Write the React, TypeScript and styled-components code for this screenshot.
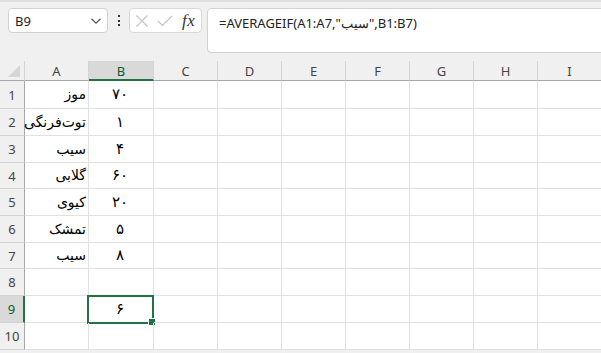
import styled, { createGlobalStyle } from 'styled-components';

const GlobalStyle = createGlobalStyle`
  html, body {
    margin: 0;
    padding: 0;
    background: #f0f0f0;
    overflow: hidden;
  }
  * {
    box-sizing: border-box;
  }
`;

const GREEN = '#217346';

const Page = styled.div`
  width: 601px;
  height: 353px;
  overflow: hidden;
  background: #f0f0f0;
  font-family: 'Noto Sans', 'Open Sans', sans-serif;
`;

const TopBar = styled.div`
  height: 61px;
  border-top: 2px solid #dedede;
  display: flex;
  align-items: flex-start;
  padding: 6px 0 0 8px;
`;

const NameBox = styled.div`
  width: 100px;
  height: 25px;
  background: #fff;
  border: 1px solid #d1d1d1;
  border-radius: 4px;
  display: flex;
  align-items: center;
  justify-content: space-between;
  padding: 0 5px 0 6px;
  font-size: 13px;
  color: #222;
`;

const Dots = styled.div`
  width: 21px;
  height: 25px;
  display: flex;
  flex-direction: column;
  align-items: center;
  justify-content: center;
  gap: 2.5px;

  span {
    width: 2px;
    height: 2px;
    background: #333;
  }
`;

const FxBox = styled.div`
  width: 73px;
  height: 25px;
  background: #fff;
  border: 1px solid #d8d8d8;
  border-radius: 4px;
  display: flex;
  align-items: center;
  padding: 0 0 0 5px;
  gap: 8px;
`;

const FxText = styled.span`
  font-family: 'Liberation Serif', 'DejaVu Serif', serif;
  font-style: italic;
  font-size: 17px;
  color: #333;
  margin-left: 1px;
  letter-spacing: 0.5px;
`;

const FormulaBox = styled.div`
  flex: 1;
  height: 45px;
  margin-left: 5px;
  margin-right: -8px;
  background: #fff;
  border: 1px solid #d1d1d1;
  border-radius: 4px;
  padding: 5px 0 0 11px;
  font-size: 13px;
  color: #222;
  white-space: nowrap;
`;

const Sheet = styled.div`
  display: grid;
  grid-template-columns: 25px 64px 65px repeat(7, 64px);
  grid-template-rows: 20px 28px 27px 27px 26px 27px 27px 26px 27px 27px 27px;
  background: #fff;
`;

const Corner = styled.div`
  background: #f0f0f0;
  border-right: 1px solid #d4d4d4;
  border-bottom: 1px solid #a8a8a8;
  position: relative;

  svg {
    position: absolute;
    right: 4px;
    bottom: 3px;
  }
`;

const ColHead = styled.div<{ $active?: boolean }>`
  background: ${({ $active }) => ($active ? '#d9d9d9' : '#f0f0f0')};
  border-right: 1px solid #d4d4d4;
  border-bottom: ${({ $active }) => ($active ? `2px solid ${GREEN}` : '1px solid #a8a8a8')};
  display: flex;
  align-items: center;
  justify-content: center;
  font-size: 13px;
  color: ${({ $active }) => ($active ? '#0e5c2f' : '#444')};
  padding-top: ${({ $active }) => ($active ? '1px' : '0')};
`;

const RowHead = styled.div<{ $active?: boolean }>`
  background: ${({ $active }) => ($active ? '#d9d9d9' : '#f0f0f0')};
  border-right: ${({ $active }) => ($active ? `2px solid ${GREEN}` : '1px solid #a8a8a8')};
  border-bottom: 1px solid #d4d4d4;
  display: flex;
  align-items: center;
  justify-content: center;
  font-size: 13px;
  color: ${({ $active }) => ($active ? '#0e5c2f' : '#444')};
`;

const Cell = styled.div<{ $align?: 'right' | 'center' }>`
  position: relative;
  border-right: 1px solid #e1e1e1;
  border-bottom: 1px solid #e1e1e1;
  display: flex;
  align-items: center;
  justify-content: ${({ $align }) => ($align === 'right' ? 'flex-end' : 'center')};
  padding: 0 2px 1px 0;
  font-family: 'DejaVu Sans', sans-serif;
  font-size: 14px;
  color: #000;
  white-space: nowrap;
`;

const Num = styled.span`
  font-size: 15px;
`;

const Selection = styled.div`
  position: absolute;
  left: -2px;
  top: -1px;
  right: -1px;
  bottom: -2px;
  border: 2px solid ${GREEN};
  pointer-events: none;
`;

const Handle = styled.div`
  position: absolute;
  right: -3px;
  bottom: -3px;
  width: 6px;
  height: 6px;
  background: ${GREEN};
  border: 1px solid #fff;
  box-sizing: content-box;
  transform: translate(1px, 1px);
`;

const columns = ['A', 'B', 'C', 'D', 'E', 'F', 'G', 'H', 'I'];

const data: Record<number, { a?: string; b?: string }> = {
  1: { a: 'موز', b: '۷۰' },
  2: { a: 'توت‌فرنگی', b: '۱' },
  3: { a: 'سیب', b: '۴' },
  4: { a: 'گلابی', b: '۶۰' },
  5: { a: 'کیوی', b: '۲۰' },
  6: { a: 'تمشک', b: '۵' },
  7: { a: 'سیب', b: '۸' },
  9: { b: '۶' },
};

const Row = ({ r }: { r: number }) => {
  const d = data[r] || {};
  return (
    <>
      <RowHead $active={r === 9}>{r}</RowHead>
      <Cell $align="right">
        <span dir="rtl">{d.a}</span>
      </Cell>
      <Cell $align="center">
        <Num>{d.b}</Num>
        {r === 9 && (
          <Selection>
            <Handle />
          </Selection>
        )}
      </Cell>
      {columns.slice(2).map((c) => (
        <Cell key={c} />
      ))}
    </>
  );
};

const App = () => {
  const rows = Array.from({ length: 10 }, (_, i) => i + 1);

  return (
    <Page>
      <GlobalStyle />
      <TopBar>
        <NameBox>
          <span>B9</span>
          <svg width="12" height="8" viewBox="0 0 12 8">
            <path d="M1.5 1.8 L6 6.2 L10.5 1.8" fill="none" stroke="#555" strokeWidth="1.2" />
          </svg>
        </NameBox>
        <Dots>
          <span />
          <span />
          <span />
        </Dots>
        <FxBox>
          <svg width="14" height="14" viewBox="0 0 14 14">
            <path d="M1.5 1.5 L12.5 12.5 M12.5 1.5 L1.5 12.5" stroke="#c4c4c4" strokeWidth="1.1" />
          </svg>
          <svg width="16" height="12" viewBox="0 0 16 12">
            <path d="M1 6 L5.5 10.5 L15 1" fill="none" stroke="#c4c4c4" strokeWidth="1.1" />
          </svg>
          <FxText>fx</FxText>
        </FxBox>
        <FormulaBox>=AVERAGEIF(A1:A7,"سیب",B1:B7)</FormulaBox>
      </TopBar>
      <Sheet>
        <Corner>
          <svg width="12" height="12" viewBox="0 0 12 12">
            <path d="M12 0 L12 12 L0 12 Z" fill="#d6d6d6" />
          </svg>
        </Corner>
        {columns.map((c) => (
          <ColHead key={c} $active={c === 'B'}>
            {c}
          </ColHead>
        ))}
        {rows.map((r) => (
          <Row key={r} r={r} />
        ))}
      </Sheet>
    </Page>
  );
};

export default App;
